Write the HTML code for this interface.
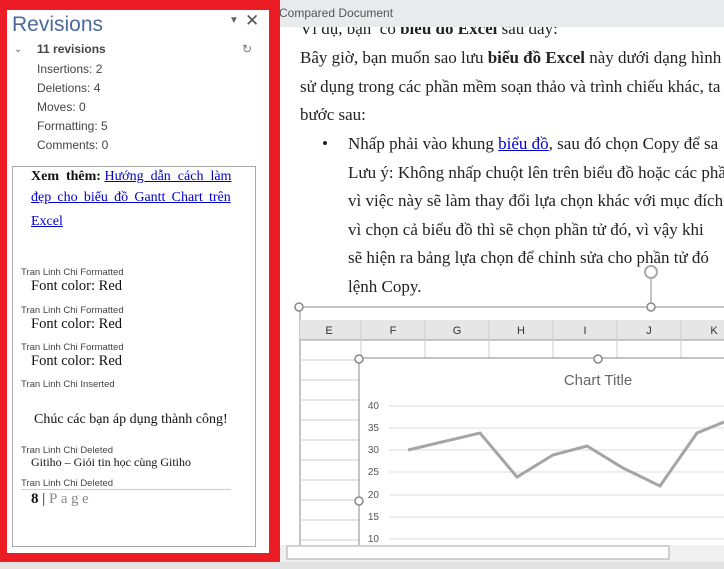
<!DOCTYPE html>
<html><head><meta charset="utf-8"><style>
*{margin:0;padding:0;box-sizing:border-box}
body{width:724px;height:569px;overflow:hidden;background:#fff;position:relative;font-family:"Liberation Sans",sans-serif}
.a{position:absolute;white-space:nowrap}
.serif{font-family:"Liberation Serif",serif}
.sm{font-size:9.5px;color:#444}
.fc{font-family:"Liberation Serif",serif;font-size:14.5px;color:#111}
.p{font-family:"Liberation Serif",serif;font-size:17px;color:#222}
</style></head><body>
<div class="a" style="left:280px;top:0;width:444px;height:27px;background:#e9eaec"></div>
<div class="a" style="left:279px;top:6px;font-size:12px;color:#555">Compared Document</div>
<div class="a p" style="left:300px;top:19px;clip-path:inset(8px 0 0 0)">Ví dụ, bạn&nbsp; có <b>biểu đồ Excel</b> sau đây:</div>
<div class="a p" style="left:300px;top:48px">Bây giờ, bạn muốn sao lưu <b>biểu đồ Excel</b> này dưới dạng hình</div>
<div class="a p" style="left:300px;top:77px">sử dụng trong các phần mềm soạn thảo và trình chiếu khác, ta</div>
<div class="a p" style="left:300px;top:105px">bước sau:</div>
<div class="a p" style="left:322px;top:134px">•</div>
<div class="a p" style="left:348px;top:134px">Nhấp phải vào khung <span style="color:#00c;text-decoration:underline">biểu đồ</span>, sau đó chọn Copy để sa</div>
<div class="a p" style="left:348px;top:163px">Lưu ý: Không nhấp chuột lên trên biểu đồ hoặc các phần</div>
<div class="a p" style="left:348px;top:191px">vì việc này sẽ làm thay đổi lựa chọn khác với mục đích</div>
<div class="a p" style="left:348px;top:220px">vì chọn cả biểu đồ thì sẽ chọn phần tử đó, vì vậy khi</div>
<div class="a p" style="left:348px;top:248px">sẽ hiện ra bảng lựa chọn để chỉnh sửa cho phần tử đó</div>
<div class="a p" style="left:348px;top:277px">lệnh Copy.</div>
<svg class="a" style="left:280px;top:260px" width="444" height="309" viewBox="280 260 444 309">
<rect x="300" y="307" width="430" height="240" fill="#fff" stroke="#888"/>
<rect x="300" y="320" width="424" height="20" fill="#e6e6e6"/>
<line x1="300" y1="340" x2="724" y2="340" stroke="#999"/>
<g stroke="#ccc"><line x1="361" y1="320" x2="361" y2="358"/><line x1="425" y1="320" x2="425" y2="358"/><line x1="489" y1="320" x2="489" y2="358"/><line x1="553" y1="320" x2="553" y2="358"/><line x1="617" y1="320" x2="617" y2="358"/><line x1="681" y1="320" x2="681" y2="358"/>
<line x1="300" y1="360" x2="360" y2="360"/><line x1="300" y1="380" x2="360" y2="380"/><line x1="300" y1="400" x2="360" y2="400"/><line x1="300" y1="420" x2="360" y2="420"/><line x1="300" y1="440" x2="360" y2="440"/><line x1="300" y1="460" x2="360" y2="460"/><line x1="300" y1="480" x2="360" y2="480"/><line x1="300" y1="500" x2="360" y2="500"/><line x1="300" y1="520" x2="360" y2="520"/><line x1="300" y1="540" x2="360" y2="540"/></g>
<g font-family="Liberation Sans" font-size="11" fill="#333" text-anchor="middle"><text x="329" y="334">E</text><text x="393" y="334">F</text><text x="457" y="334">G</text><text x="521" y="334">H</text><text x="585" y="334">I</text><text x="649" y="334">J</text><text x="714" y="334">K</text></g>
<rect x="359" y="358" width="370" height="200" fill="#fff" stroke="#888"/>
<line x1="300" y1="307" x2="724" y2="307" stroke="#888"/>
<line x1="651" y1="278" x2="651" y2="307" stroke="#888"/>
<g fill="#fff" stroke="#888" stroke-width="1.5"><circle cx="299" cy="307" r="4"/><circle cx="651" cy="307" r="4"/><circle cx="359" cy="359" r="4"/><circle cx="598" cy="359" r="4"/><circle cx="359" cy="501" r="4"/></g>
<circle cx="651" cy="272" r="6" fill="none" stroke="#aaa" stroke-width="2"/>
<text x="598" y="385" font-family="Liberation Sans" font-size="15" fill="#666" text-anchor="middle">Chart Title</text>
<g stroke="#ddd"><line x1="389" y1="406" x2="724" y2="406"/><line x1="389" y1="428" x2="724" y2="428"/><line x1="389" y1="450" x2="724" y2="450"/><line x1="389" y1="472" x2="724" y2="472"/><line x1="389" y1="495" x2="724" y2="495"/><line x1="389" y1="517" x2="724" y2="517"/><line x1="389" y1="539" x2="724" y2="539"/></g>
<g font-family="Liberation Sans" font-size="10" fill="#555" text-anchor="end"><text x="379" y="409">40</text><text x="379" y="431">35</text><text x="379" y="453">30</text><text x="379" y="475">25</text><text x="379" y="498">20</text><text x="379" y="520">15</text><text x="379" y="542">10</text></g>
<polyline points="408,450 480,433 517,477 553,455 587,446 623,468 660,486 697,433 724,422" fill="none" stroke="#a5a5a5" stroke-width="3"/>
<rect x="280" y="545" width="444" height="17" fill="#f0f0f0"/>
<rect x="287" y="546" width="382" height="13" fill="#fff" stroke="#aaa"/>
<rect x="280" y="562" width="444" height="7" fill="#e3e3e3"/>
</svg>
<div class="a" style="left:0;top:0;width:280px;height:562px;background:#ec1c24"></div>
<div class="a" style="left:0;top:562px;width:280px;height:7px;background:#e3e3e3"></div>
<div class="a" style="left:7px;top:10px;width:262px;height:543px;background:#fff"></div>
<div class="a" style="left:12px;top:13px;font-size:21px;color:#4a6a9a">Revisions</div>
<div class="a" style="left:229px;top:15px;font-size:10px;color:#666">▼</div>
<div class="a" style="left:245px;top:11px;font-size:17px;color:#555">✕</div>
<div class="a" style="left:14px;top:44px;font-size:10px;color:#666">⌄</div>
<div class="a" style="left:37px;top:42px;font-size:12px;font-weight:bold;color:#444">11 revisions</div>
<div class="a" style="left:242px;top:42px;font-size:12px;color:#777">↻</div>
<div class="a" style="left:37px;top:62px;font-size:12px;color:#444">Insertions: 2</div>
<div class="a" style="left:37px;top:81px;font-size:12px;color:#444">Deletions: 4</div>
<div class="a" style="left:37px;top:100px;font-size:12px;color:#444">Moves: 0</div>
<div class="a" style="left:37px;top:119px;font-size:12px;color:#444">Formatting: 5</div>
<div class="a" style="left:37px;top:138px;font-size:12px;color:#444">Comments: 0</div>
<div class="a" style="left:12px;top:166px;width:244px;height:381px;border:1px solid #a8a8a8"></div>
<div class="a serif" style="left:31px;top:165px;font-size:14px;line-height:24px;color:#111"><b>Xem&nbsp; thêm:</b> <span style="color:#00c;text-decoration:underline">Hướng&nbsp; dẫn&nbsp; cách&nbsp; làm</span></div>
<div class="a serif" style="left:31px;top:186px;font-size:14px;line-height:24px;color:#00c;text-decoration:underline;word-spacing:2.7px">đẹp cho biểu đồ Gantt Chart trên</div>
<div class="a serif" style="left:31px;top:210px;font-size:14px;line-height:24px;color:#00c;text-decoration:underline">Excel</div>
<div class="a sm" style="left:21px;top:267px">Tran Linh Chi Formatted</div>
<div class="a fc" style="left:31px;top:278px">Font color: Red</div>
<div class="a sm" style="left:21px;top:305px">Tran Linh Chi Formatted</div>
<div class="a fc" style="left:31px;top:316px">Font color: Red</div>
<div class="a sm" style="left:21px;top:342px">Tran Linh Chi Formatted</div>
<div class="a fc" style="left:31px;top:353px">Font color: Red</div>
<div class="a sm" style="left:21px;top:379px">Tran Linh Chi Inserted</div>
<div class="a serif" style="left:34px;top:412px;font-size:14px;color:#111">Chúc các bạn áp dụng thành công!</div>
<div class="a sm" style="left:21px;top:445px">Tran Linh Chi Deleted</div>
<div class="a serif" style="left:31px;top:455px;font-size:12px;color:#111">Gitiho – Giỏi tin học cùng Gitiho</div>
<div class="a sm" style="left:21px;top:478px">Tran Linh Chi Deleted</div>
<div class="a" style="left:21px;top:489px;width:210px;border-top:1px solid #ccc"></div>
<div class="a serif" style="left:31px;top:491px;font-size:15px;color:#111"><b>8</b> | <span style="color:#888;letter-spacing:3.5px">Page</span></div>
</body></html>
